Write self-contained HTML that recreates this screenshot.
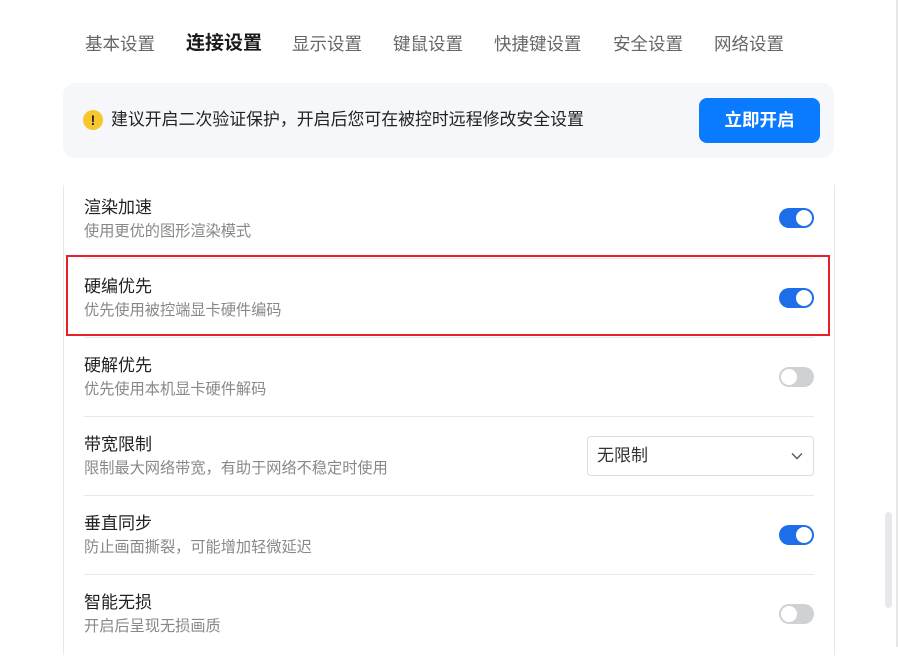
<!DOCTYPE html>
<html><head><meta charset="utf-8"><style>
*{margin:0;padding:0;box-sizing:border-box}
body{width:898px;height:647px;overflow:hidden;background:#fff;font-family:"Liberation Sans","Noto Sans CJK SC",sans-serif;position:relative}
.tab{position:absolute;top:32px;font-size:17.5px;color:#666;line-height:24px;white-space:nowrap}
.tab.b{color:#1a1a1a;font-weight:bold;font-size:19px;top:32px}
.banner{position:absolute;left:63px;top:83px;width:771px;height:75px;background:#f5f7fa;border-radius:12px}
.warn{position:absolute;left:83px;top:110px;width:20px;height:20px;border-radius:50%;background:#f7c62f;color:#222;font-size:14px;font-weight:bold;text-align:center;line-height:20px}
.btext{position:absolute;left:111px;top:108px;font-size:16.9px;color:#222;line-height:24px;white-space:nowrap}
.btn{position:absolute;left:699px;top:98px;width:121px;height:45px;background:#0a7aff;border-radius:8px;color:#fff;font-size:17.5px;font-weight:bold;text-align:center;line-height:45px}
.card{position:absolute;left:63px;top:185px;width:772px;height:470px;border-left:1px solid #e8e8e8;border-right:1px solid #e8e8e8}
.row{position:absolute;left:84px;width:730px;height:79px}
.sep{position:absolute;left:84px;width:730px;height:1px;background:#e8e8e8}
.t{position:absolute;left:0;font-size:17px;color:#222;line-height:22px;white-space:nowrap}
.s{position:absolute;left:0;font-size:15.2px;color:#888;line-height:20px;white-space:nowrap}
.tg{position:absolute;right:0;width:35px;height:20px;border-radius:10px}
.tg.on{background:#1c6fe8}.tg.off{background:#d0d1d5}
.tg i{position:absolute;top:2px;width:16px;height:16px;border-radius:50%;background:#fff}
.tg.on i{right:2px}.tg.off i{left:2px}
.sel{position:absolute;left:587px;top:436px;width:227px;height:40px;border:1px solid #ddd;border-radius:4px;font-size:17px;color:#333;line-height:38px;padding-left:9px}
.red{position:absolute;left:66px;top:255px;width:764px;height:81px;border:2px solid #e8202a}
.sb{position:absolute;left:885px;top:512px;width:7px;height:96px;background:#e6e8eb;border-radius:4px}
.edge{position:absolute;left:896px;top:0;width:2px;height:647px;background:#e6e6e6}
</style></head><body>
<div class="tab" style="left:85px">基本设置</div>
<div class="tab b" style="left:186px">连接设置</div>
<div class="tab" style="left:292px">显示设置</div>
<div class="tab" style="left:393px">键鼠设置</div>
<div class="tab" style="left:494px">快捷键设置</div>
<div class="tab" style="left:613px">安全设置</div>
<div class="tab" style="left:714px">网络设置</div>
<div class="banner"></div>
<div class="warn">!</div>
<div class="btext">建议开启二次验证保护，开启后您可在被控时远程修改安全设置</div>
<div class="btn">立即开启</div>
<div class="card"></div>

<div class="row" style="top:185px"><div class="t" style="top:12px">渲染加速</div><div class="s" style="top:37px">使用更优的图形渲染模式</div><div class="tg on" style="top:23px"><i></i></div></div>
<div class="sep" style="top:258px"></div>
<div class="row" style="top:264px"><div class="t" style="top:12px">硬编优先</div><div class="s" style="top:37px">优先使用被控端显卡硬件编码</div><div class="tg on" style="top:24px"><i></i></div></div>
<div class="sep" style="top:337px"></div>
<div class="row" style="top:343px"><div class="t" style="top:12px">硬解优先</div><div class="s" style="top:37px">优先使用本机显卡硬件解码</div><div class="tg off" style="top:24px"><i></i></div></div>
<div class="sep" style="top:416px"></div>
<div class="row" style="top:422px"><div class="t" style="top:12px">带宽限制</div><div class="s" style="top:37px">限制最大网络带宽，有助于网络不稳定时使用</div></div>
<div class="sel">无限制<svg style="position:absolute;right:10px;top:15px" width="12" height="8" viewBox="0 0 12 8"><path d="M1 1.5L6 6.5L11 1.5" fill="none" stroke="#555" stroke-width="1.4"/></svg></div>
<div class="sep" style="top:495px"></div>
<div class="row" style="top:501px"><div class="t" style="top:12px">垂直同步</div><div class="s" style="top:37px">防止画面撕裂，可能增加轻微延迟</div><div class="tg on" style="top:24px"><i></i></div></div>
<div class="sep" style="top:574px"></div>
<div class="row" style="top:580px"><div class="t" style="top:12px">智能无损</div><div class="s" style="top:37px">开启后呈现无损画质</div><div class="tg off" style="top:24px"><i></i></div></div>
<div class="red"></div>
<div class="sb"></div>
<div class="edge"></div>
</body></html>
